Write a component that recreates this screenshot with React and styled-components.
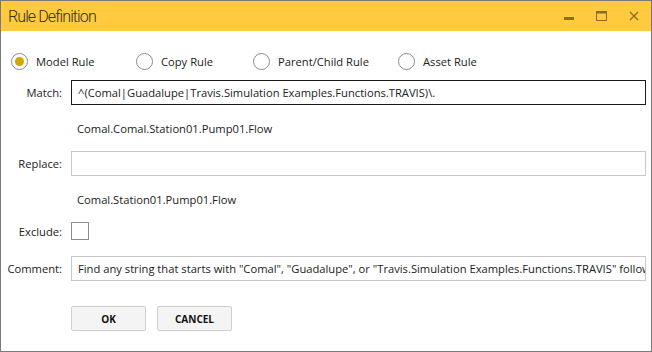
import React from "react";
import styled, { createGlobalStyle } from "styled-components";

const GlobalStyle = createGlobalStyle`
  html, body { margin: 0; padding: 0; background: #ffffff; }
  * { box-sizing: border-box; }
  body { font-family: "Open Sans", "Noto Sans", sans-serif; }
`;

const Window = styled.div`
  width: 652px;
  height: 352px;
  border: 1px solid #7a7a7a;
  display: flex;
  flex-direction: column;
  background: #ffffff;
  overflow: hidden;
`;

const TitleBar = styled.div`
  height: 30px;
  background: #ffca3d;
  display: flex;
  align-items: center;
  padding-left: 7px;
  padding-right: 12px;
`;

const Title = styled.div`
  flex: 1;
  font-family: Roboto, "Open Sans", sans-serif;
  font-weight: 300;
  font-size: 16px;
  color: #2e2e2e;
  letter-spacing: -0.9px;
`;

const Controls = styled.div`
  display: flex;
  align-items: center;
  gap: 22px;
  color: #8a6d1e;
`;

const Body = styled.div`
  flex: 1;
  padding: 22px 5px 0 0;
  display: flex;
  flex-direction: column;
`;

const RadioRow = styled.div`
  display: grid;
  grid-template-columns: 125px 117px 145px auto;
  align-items: center;
  padding-left: 10px;
  height: 16px;
  margin-bottom: 11px;
`;

const RadioItem = styled.label`
  display: flex;
  align-items: center;
  gap: 8px;
  font-size: 11.2px;
  color: #222;
`;

const RadioCircle = styled.span`
  width: 17px;
  height: 17px;
  border-radius: 50%;
  border: 1px solid #8c8c8c;
  display: flex;
  align-items: center;
  justify-content: center;
  &::after {
    content: "";
    width: 9px;
    height: 9px;
    border-radius: 50%;
    background: ${(p) => (p.checked ? "#d4a600" : "transparent")};
  }
`;

const FieldRow = styled.div`
  display: grid;
  grid-template-columns: 61px 1fr;
  column-gap: 9px;
  align-items: center;
`;

const Label = styled.div`
  text-align: right;
  font-size: 11.2px;
  color: #222;
`;

const TextBox = styled.div`
  height: 25px;
  border: 1px solid ${(p) => (p.focused ? "#1a1a1a" : "#c8c8c8")};
  display: flex;
  align-items: center;
  padding-left: 6px;
  font-size: 11.2px;
  color: #222;
  white-space: nowrap;
  overflow: hidden;
`;

const Hint = styled.div`
  height: 46px;
  display: flex;
  align-items: center;
  padding-left: 76px;
  font-size: 11.2px;
  color: #222;
`;

const CheckBox = styled.div`
  width: 18px;
  height: 18px;
  border: 1px solid #8c8c8c;
  background: #fff;
`;

const Spacer = styled.div`
  height: ${(p) => p.h}px;
`;

const ButtonRow = styled.div`
  display: flex;
  gap: 11px;
  padding-left: 70px;
`;

const Button = styled.button`
  width: 75px;
  height: 25px;
  background: #f4f4f4;
  border: 1px solid #cfcfcf;
  border-radius: 2px;
  font-family: "Open Sans", "Noto Sans", sans-serif;
  font-weight: 700;
  font-size: 10px;
  color: #111;
  padding: 0;
`;

const radios = [
  { label: "Model Rule", checked: true },
  { label: "Copy Rule" },
  { label: "Parent/Child Rule" },
  { label: "Asset Rule" },
];

export default function App() {
  return (
    <>
      <GlobalStyle />
      <Window>
        <TitleBar>
          <Title>Rule Definition</Title>
          <Controls>
            <svg width="10" height="10" viewBox="0 0 10 10">
              <rect x="0" y="6" width="10" height="3" fill="currentColor" />
            </svg>
            <svg width="11" height="10" viewBox="0 0 11 10">
              <rect x="0.5" y="0.5" width="10" height="9" fill="none" stroke="currentColor" />
              <rect x="0" y="0" width="11" height="2.5" fill="currentColor" />
            </svg>
            <svg width="10" height="10" viewBox="0 0 10 10">
              <path d="M1 1 L9 9 M9 1 L1 9" stroke="currentColor" strokeWidth="1.3" />
            </svg>
          </Controls>
        </TitleBar>
        <Body>
          <RadioRow>
            {radios.map((r) => (
              <RadioItem key={r.label}>
                <RadioCircle checked={r.checked} />
                {r.label}
              </RadioItem>
            ))}
          </RadioRow>
          <FieldRow>
            <Label>Match:</Label>
            <TextBox focused>^(Comal|Guadalupe|Travis.Simulation Examples.Functions.TRAVIS)\.</TextBox>
          </FieldRow>
          <Hint>Comal.Comal.Station01.Pump01.Flow</Hint>
          <FieldRow>
            <Label>Replace:</Label>
            <TextBox />
          </FieldRow>
          <Hint>Comal.Station01.Pump01.Flow</Hint>
          <FieldRow>
            <Label>Exclude:</Label>
            <CheckBox />
          </FieldRow>
          <Spacer h={16} />
          <FieldRow>
            <Label>Comment:</Label>
            <TextBox>
              Find any string that starts with "Comal", "Guadalupe", or "Travis.Simulation Examples.Functions.TRAVIS" followed by a period.
            </TextBox>
          </FieldRow>
          <Spacer h={25} />
          <ButtonRow>
            <Button>OK</Button>
            <Button>CANCEL</Button>
          </ButtonRow>
        </Body>
      </Window>
    </>
  );
}
